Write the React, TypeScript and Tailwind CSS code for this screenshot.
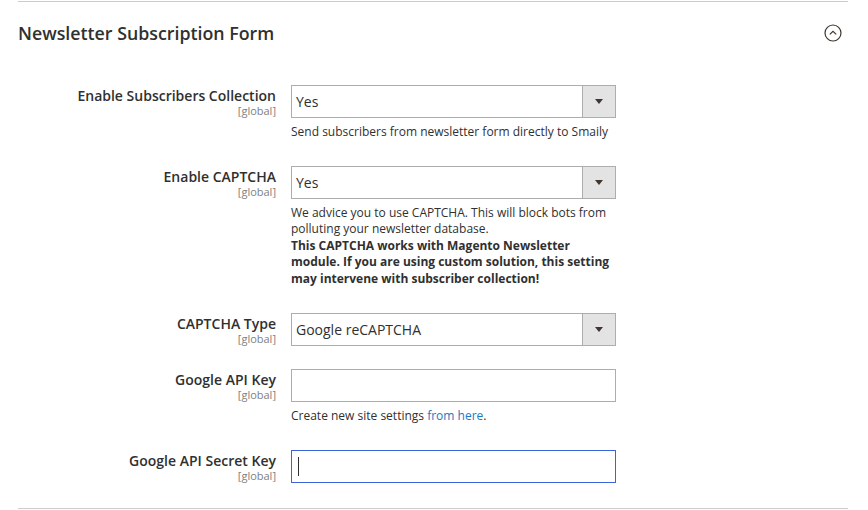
import React from 'react';

const font = { fontFamily: '"Open Sans", "Noto Sans", sans-serif' };

const Label: React.FC<{ text: string }> = ({ text }) => (
  <div className="w-[258px] shrink-0 pt-[2px] text-right">
    <div className="text-[14px] font-semibold leading-[17px] text-[#303030]">{text}</div>
    <div className="text-[11px] leading-[13px] text-[#808080]">[global]</div>
  </div>
);

const Select: React.FC<{ value: string }> = ({ value }) => (
  <div className="flex h-[33px] w-[325px] border border-[#adadad] bg-white">
    <div className="flex flex-1 items-center pl-[4px] text-[14px] text-[#303030]">{value}</div>
    <div className="flex w-[33px] items-center justify-center border-l border-[#adadad] bg-[#e3e3e3]">
      <svg width="8" height="5" viewBox="0 0 8 5">
        <path d="M0 0 L8 0 L4 5 Z" fill="#41362f" />
      </svg>
    </div>
  </div>
);

const Input: React.FC<{ focused?: boolean }> = ({ focused }) => (
  <div
    className={
      focused
        ? 'flex h-[33px] w-[325px] items-center border border-[#3d64d9] bg-white pl-[6px]'
        : 'flex h-[33px] w-[325px] items-center border border-[#adadad] bg-white pl-[6px]'
    }
  >
    {focused && <div className="h-[19px] w-px bg-[#303030]" />}
  </div>
);

const Note: React.FC<{ children: React.ReactNode }> = ({ children }) => (
  <div className="mt-[6px] mb-[3px] text-[12px] leading-[16.6px] text-[#303030]">{children}</div>
);

const Row: React.FC<{ label: string; children: React.ReactNode; gap?: string }> = ({ label, children, gap }) => (
  <div className={`flex gap-[15px] ${gap ?? ''}`}>
    <Label text={label} />
    <div className="w-[325px]">{children}</div>
  </div>
);

export default function App() {
  return (
    <div className="h-[510px] w-[868px] bg-white pt-px" style={font}>
      <div className="mx-[18px] w-[830px] border-t border-b border-[#cccccc]">
        <div className="flex h-[62px] items-center justify-between">
          <h2 className="text-[17.8px] font-semibold text-[#303030]">Newsletter Subscription Form</h2>
          <svg width="18" height="18" viewBox="0 0 18 18" className="mr-[6px]">
            <circle cx="9" cy="9" r="8" fill="none" stroke="#41362f" strokeWidth="1.2" />
            <path d="M5.8 10.4 L9 7.4 L12.2 10.4" fill="none" stroke="#41362f" strokeWidth="1.2" />
          </svg>
        </div>
        <div className="pt-[21px] pb-[25px]">
          <Row label="Enable Subscribers Collection" gap="mb-[22px]">
            <Select value="Yes" />
            <Note>Send subscribers from newsletter form directly to Smaily</Note>
          </Row>
          <Row label="Enable CAPTCHA" gap="mb-[22px]">
            <Select value="Yes" />
            <Note>
              We advice you to use CAPTCHA. This will block bots from polluting your newsletter database.
              <br />
              <span className="font-bold">
                This CAPTCHA works with Magento Newsletter module. If you are using custom solution, this setting may
                intervene with subscriber collection!
              </span>
            </Note>
          </Row>
          <Row label="CAPTCHA Type" gap="mb-[23px]">
            <Select value="Google reCAPTCHA" />
          </Row>
          <Row label="Google API Key" gap="mb-[23px]">
            <Input />
            <Note>
              Create new site settings <span className="text-[#1979c3]">from here</span>.
            </Note>
          </Row>
          <Row label="Google API Secret Key">
            <Input focused />
          </Row>
        </div>
      </div>
    </div>
  );
}
